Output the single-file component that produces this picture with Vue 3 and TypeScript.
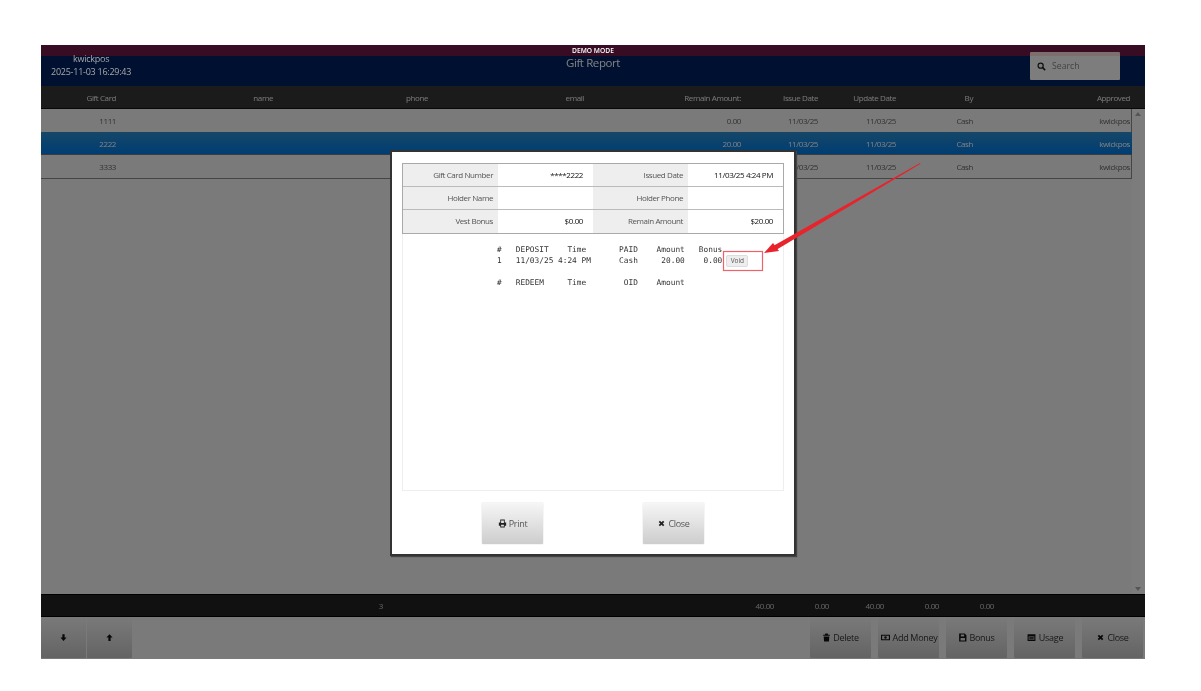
<script setup lang="ts">
const columns = ["Gift Card", "name", "phone", "email", "Remain Amount:", "Issue Date", "Update Date", "By", "Approved"];

const rows = [
  { card: "1111", remain: "0.00", selected: false },
  { card: "2222", remain: "20.00", selected: true },
  { card: "3333", remain: "20.00", selected: false },
];

const totals = ["3", "40.00", "0.00", "40.00", "0.00", "0.00"];

const info = [
  ["Gift Card Number", "****2222", "Issued Date", "11/03/25 4:24 PM"],
  ["Holder Name", "", "Holder Phone", ""],
  ["Vest Bonus", "$0.00", "Remain Amount", "$20.00"],
];
</script>

<template>
  <div class="page">
    <div class="app">
      <header class="top">
        <div class="demo-strip"><span>DEMO MODE</span></div>
        <div class="top-main">
          <div class="who">
            <div>kwickpos</div>
            <div>2025-11-03 16:29:43</div>
          </div>
          <div class="title">Gift Report</div>
          <div class="search">
            <svg class="ic" viewBox="0 0 16 16"><circle cx="6.5" cy="6.5" r="4.5" fill="none" stroke="currentColor" stroke-width="2.2" /><path d="M10 10l4.5 4.5" stroke="currentColor" stroke-width="2.8" /></svg>
            <span>Search</span>
          </div>
        </div>
      </header>

      <div class="thead">
        <div class="cols">
          <span v-for="c in columns" :key="c">{{ c }}</span>
        </div>
      </div>

      <main class="list">
        <div class="rows">
          <div v-for="r in rows" :key="r.card" class="cols row" :class="{ selected: r.selected }">
            <span>{{ r.card }}</span>
            <span></span>
            <span></span>
            <span></span>
            <span>{{ r.remain }}</span>
            <span>11/03/25</span>
            <span>11/03/25</span>
            <span>Cash</span>
            <span>kwickpos</span>
          </div>
        </div>
        <div class="scrollbar">
          <i class="up"></i>
          <i class="down"></i>
        </div>
      </main>

      <div class="totals">
        <span v-for="(t, i) in totals" :key="i">{{ t }}</span>
      </div>

      <footer class="actions">
        <div class="group">
          <button class="btn small">
            <svg class="ic" viewBox="0 0 16 16"><path d="M6 2h4v6h3.500L8 14 2.500 8H6z" fill="currentColor" /></svg>
          </button>
          <button class="btn small">
            <svg class="ic" viewBox="0 0 16 16"><path d="M6 14h4V8h3.500L8 2 2.500 8H6z" fill="currentColor" /></svg>
          </button>
        </div>
        <div class="group wide">
          <button class="btn">
            <svg class="ic" viewBox="0 0 16 16"><path d="M6 1h4l1 2h3v2H2V3h3zM3 6h10l-.7 9H3.700z" fill="currentColor" /></svg>
            Delete
          </button>
          <button class="btn">
            <svg class="ic wide-ic" viewBox="0 0 16 16"><path fill-rule="evenodd" d="M0 3h16v10H0zM2 5v6h12V5z" fill="currentColor" /><circle cx="8" cy="8" r="2.200" fill="currentColor" /></svg>
            Add Money
          </button>
          <button class="btn">
            <svg class="ic" viewBox="0 0 16 16"><path fill-rule="evenodd" d="M2 1h10l3 3v11H2zM5 2.500V6h6V2.500zM4.500 9v4.500h8V9z" fill="currentColor" /></svg>
            Bonus
          </button>
          <button class="btn">
            <svg class="ic wide-ic" viewBox="0 0 16 16"><path fill-rule="evenodd" d="M1 2h14v12H1zM3 6v6h10V6zM4 7h8v1.500H4zM4 9.500h8V11H4z" fill="currentColor" /></svg>
            Usage
          </button>
          <button class="btn">
            <svg class="ic" viewBox="0 0 16 16"><path d="M3 5.200L5.200 3 8 5.800 10.800 3 13 5.200 10.200 8 13 10.800 10.800 13 8 10.200 5.200 13 3 10.800 5.800 8z" fill="currentColor" /></svg>
            Close
          </button>
        </div>
      </footer>

      <div class="overlay">
        <section class="modal">
          <div class="info">
            <div v-for="line in info" :key="line[0]" class="info-row">
              <template v-for="(cell, i) in line" :key="i">
                <div :class="i % 2 === 0 ? 'label' : 'value'">{{ cell }}</div>
              </template>
            </div>
          </div>

          <div class="history">
            <pre class="log">#   DEPOSIT    Time       PAID    Amount   Bonus
1   11/03/25 4:24 PM      Cash     20.00    0.00<button class="void">Void</button>

#   REDEEM     Time        OID    Amount</pre>
          </div>

          <div class="modal-actions">
            <button class="mbtn">
              <svg class="ic" viewBox="0 0 16 16"><path fill-rule="evenodd" d="M4 1h8v5h2.500v6H12v3H4v-3H1.500V6H4zM5.500 2.500V7h5V2.500zM5.500 10v3.500h5V10z" fill="currentColor" /></svg>
              Print
            </button>
            <button class="mbtn">
              <svg class="ic" viewBox="0 0 16 16"><path d="M3 5.200L5.200 3 8 5.800 10.800 3 13 5.200 10.200 8 13 10.800 10.800 13 8 10.200 5.200 13 3 10.800 5.800 8z" fill="currentColor" /></svg>
              Close
            </button>
          </div>
        </section>
      </div>
    </div>

    <!-- annotation drawn over the screenshot -->
    <svg class="markup" viewBox="0 0 1201 691">
      <rect x="723.500" y="251.500" width="39" height="19" fill="none" stroke="#f0626a" stroke-width="1.200" />
      <path d="M920 163L920.600 163.800L776 250L774 245.500z" fill="#e8232c" />
      <path d="M764 253L773 243L779 251z" fill="#e8232c" />
    </svg>
  </div>
</template>

<style>
html,
body {
  margin: 0;
  background: #fff;
}
</style>

<style scoped>
.page {
  position: relative;
  width: 1201px;
  height: 691px;
  padding: 45px 56px 32px 41px;
  box-sizing: border-box;
  overflow: hidden;
  background: #fff;
  font-family: "Open Sans", "Noto Sans", sans-serif;
  font-size: 8px;
  letter-spacing: -0.4px;
  filter: blur(0.3px);
}

.app {
  position: relative;
  height: 614px;
  display: flex;
  flex-direction: column;
  overflow: hidden;
  background: #f4f4f4;
  color: #666;
}

.top {
  height: 41px;
  flex: none;
  background: #002060;
  color: #fff;
}

.demo-strip {
  height: 11px;
  background: #701a48;
  text-align: center;
  font-size: 6.700px;
  font-weight: 600;
  letter-spacing: 0;
  line-height: 11px;
}

.demo-strip span {
  position: relative;
  z-index: 2;
}

.top-main {
  position: relative;
  display: flex;
  justify-content: center;
  height: 30px;
}

.who {
  position: absolute;
  z-index: 2;
  left: 10px;
  top: -4px;
  text-align: center;
  font-size: 9px;
  letter-spacing: -0.25px;
  line-height: 13px;
  color: #a8a8a8;
}

.title {
  font-size: 11.500px;
  letter-spacing: -0.4px;
  line-height: 14px;
}

.search {
  position: absolute;
  top: -4px;
  right: 25px;
  width: 90px;
  height: 28px;
  display: flex;
  align-items: center;
  gap: 6px;
  padding-left: 7px;
  box-sizing: border-box;
  border-radius: 1px;
  background: linear-gradient(#ffdcdc 4px, #fafafa 4px);
  color: #222;
  font-size: 8.700px;
  letter-spacing: 0;
}

.search span {
  color: #888;
}

.ic {
  width: 9px;
  height: 9px;
  flex: none;
}

.wide-ic {
  width: 11px;
}

.thead {
  height: 23px;
  flex: none;
  padding-top: 1px;
  background: #363636;
  color: #eee;
  border-bottom: 1px solid #111;
  box-sizing: border-box;
}

.cols {
  display: grid;
  grid-template-columns: 75px 157px 155px 156px 157px 77px 78px 77px 157px;
  align-items: center;
  height: 100%;
  text-align: right;
}

.list {
  flex: 1;
  display: flex;
  min-height: 0;
}

.rows {
  width: 1091px;
}

.row {
  height: 23px;
  border-bottom: 1px solid #8a8a8a;
  border-right: 1px solid #8a8a8a;
  box-sizing: border-box;
}

.row:first-child {
  border-bottom: 0;
}

.row:last-child {
  height: 24px;
  border-left: 1px solid #8a8a8a;
  margin-left: -1px;
}

.row.selected {
  color: #fff;
  background: linear-gradient(#2b8ecf, #007be8);
  border-bottom: 1px solid #777;
  border-right: 0;
}

.scrollbar {
  flex: 1;
  position: relative;
  background: #f8f8f8;
}

.scrollbar i {
  position: absolute;
  left: 3px;
  width: 0;
  height: 0;
  border: 3px solid transparent;
}

.scrollbar .up {
  top: 0;
  border-bottom: 4px solid #aaa;
}

.scrollbar .down {
  bottom: 0;
  border-top: 4px solid #aaa;
}

.totals {
  height: 23px;
  flex: none;
  display: grid;
  grid-template-columns: 342px 391px 55px 55px 55px 55px;
  align-items: center;
  text-align: right;
  background: #222;
  color: #ccc;
  border-top: 1px solid #000;
  border-bottom: 1px solid #000;
  box-sizing: border-box;
}

.actions {
  height: 42px;
  flex: none;
  display: flex;
  justify-content: space-between;
  padding-bottom: 1px;
  box-sizing: border-box;
}

.group {
  display: flex;
  gap: 1px;
}

.group.wide {
  gap: 7px;
  padding-right: 2px;
}

.btn {
  width: 61px;
  display: flex;
  align-items: center;
  justify-content: center;
  gap: 2px;
  border: 0;
  padding: 0;
  border-radius: 1px;
  background: linear-gradient(#f4f4f4, #c8c8c8);
  color: #333;
  font: inherit;
  font-size: 9px;
  letter-spacing: -0.3px;
  white-space: nowrap;
}

.btn .ic {
  color: #111;
}

.btn.small {
  width: 45px;
  color: #000;
}

.overlay {
  position: absolute;
  inset: 0;
  padding-top: 1px;
  display: flex;
  align-items: center;
  justify-content: center;
  background: rgba(0, 0, 0, 0.5);
}

.modal {
  width: 406px;
  height: 406px;
  box-sizing: border-box;
  padding: 11px 10px 0;
  display: flex;
  flex-direction: column;
  background: #fff;
  border: 2px solid #333;
  box-shadow: 1px 1px 1px #444;
  color: #555;
}

.info {
  border: 1px solid #a9a9a9;
  flex: none;
}

.info-row {
  display: grid;
  grid-template-columns: repeat(4, 1fr);
  height: 23px;
  box-sizing: border-box;
  border-bottom: 1px solid #bbb;
}

.info-row:last-child {
  border-bottom: 0;
}

.label,
.value {
  text-align: right;
  line-height: 22px;
  padding-right: 10px;
  white-space: nowrap;
}

.label {
  background: #eee;
  padding-right: 5px;
}

.value {
  color: #111;
}

.history {
  height: 257px;
  flex: none;
  box-sizing: border-box;
  border: 1px solid #eee;
  border-top: 0;
  padding: 10px 0 0 94px;
}

.log {
  margin: 0;
  font-family: "DejaVu Sans Mono", "Liberation Mono", monospace;
  font-size: 7.800px;
  letter-spacing: 0;
  line-height: 11.300px;
  color: #333;
}

.void {
  position: relative;
  top: 0;
  margin: -1px 0 -1px 4px;
  width: 22px;
  height: 12px;
  padding: 0;
  border: 1px solid #ddd;
  border-radius: 2px;
  background: #eee;
  color: #555;
  font-family: "Open Sans", sans-serif;
  font-size: 6.500px;
  line-height: 10px;
}

.modal-actions {
  display: flex;
  justify-content: center;
  gap: 100px;
  margin-top: 12px;
}

.mbtn {
  width: 61px;
  height: 41px;
  display: flex;
  align-items: center;
  justify-content: center;
  gap: 2px;
  padding: 0;
  border: 0;
  border-radius: 1px;
  background: linear-gradient(#f6f6f6, #cdcdcd);
  box-shadow: 0 0 1px #999;
  color: #555;
  font: inherit;
  font-size: 9px;
  letter-spacing: -0.3px;
}

.mbtn .ic {
  color: #222;
}

.markup {
  position: absolute;
  inset: 0;
  width: 1201px;
  height: 691px;
  pointer-events: none;
}
</style>
